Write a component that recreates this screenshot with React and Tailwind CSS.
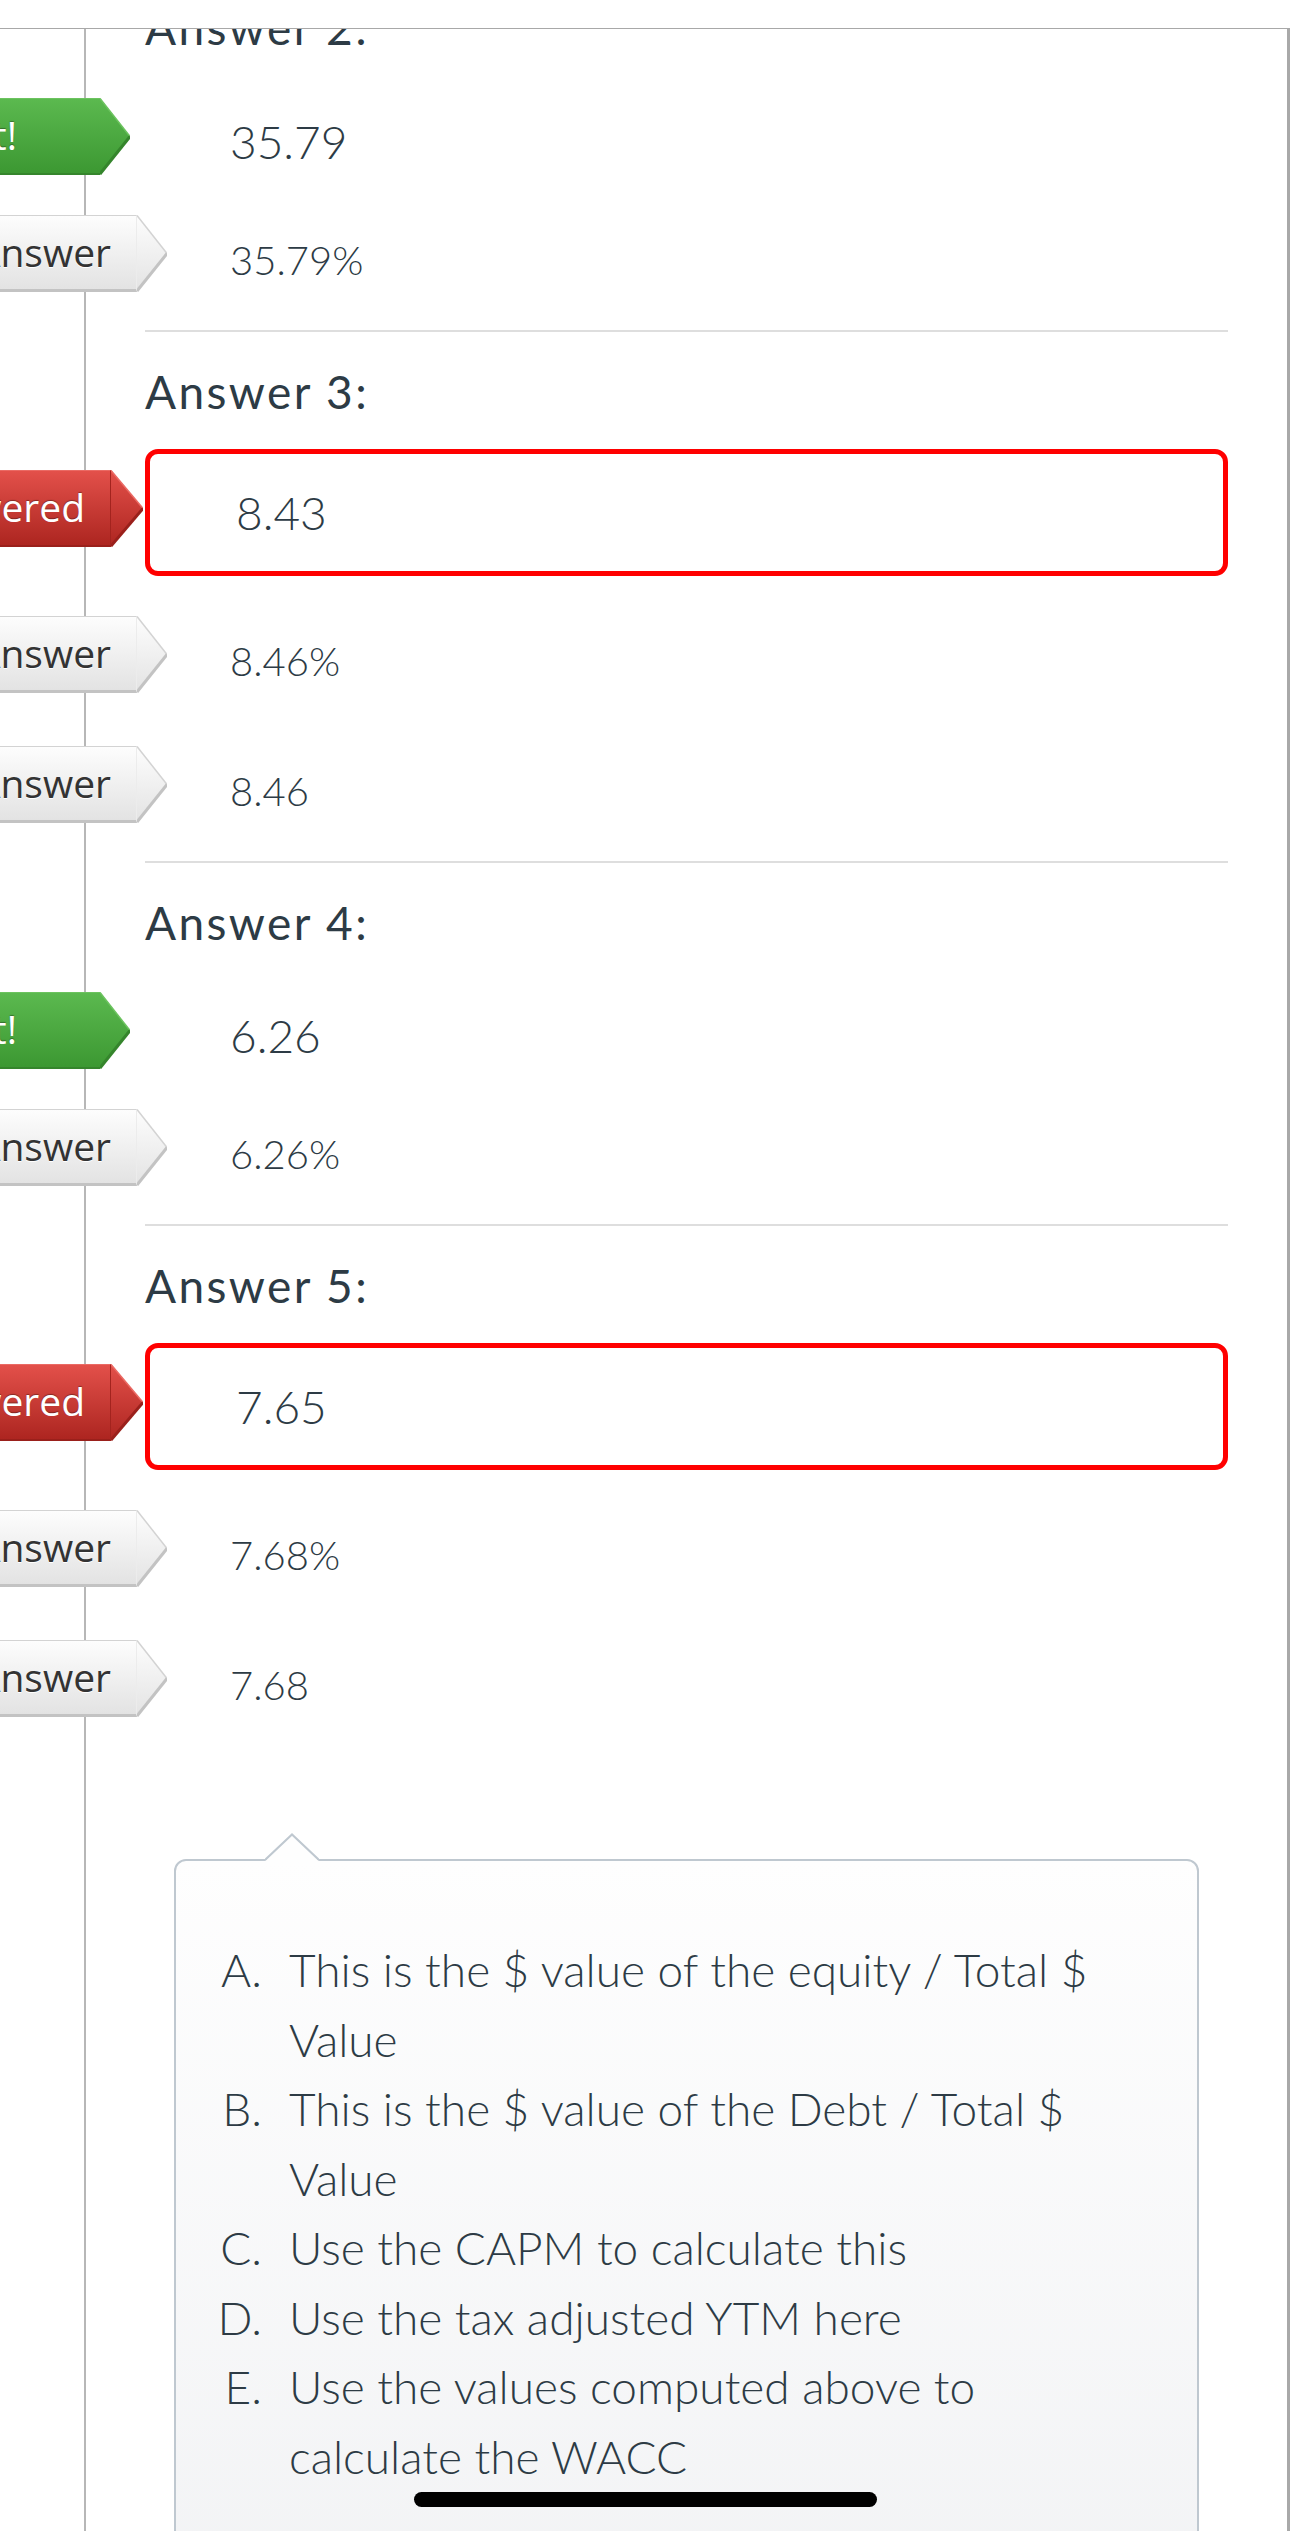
import React from "react";

// colours of the three answer arrows
const tones = {
  green: {
    body: "bg-linear-to-b from-[#5bb94f] to-[#3c9832] border-t border-t-[#6cc35f] border-b-2 border-b-[#35852c] text-white [text-shadow:0_-1px_1px_rgba(0,0,0,0.35)]",
    from: "#5bb94f",
    to: "#3c9832",
    edgeTop: "#6cc35f",
    edgeBottom: "#35852c",
    arrow: 30,
    pr: "pr-[83px]",
    mr: "mr-[15px]",
    mb: "mb-[12px]",
  },
  red: {
    body: "bg-linear-to-b from-[#e3504a] to-[#ad2520] border-t border-t-[#ea6a64] border-b-2 border-b-[#9a201b] border-r border-r-[#a3231e] text-white [text-shadow:0_-1px_1px_rgba(0,0,0,0.35)]",
    from: "#e3504a",
    to: "#ad2520",
    edgeTop: "#ea6a64",
    edgeBottom: "#9a201b",
    arrow: 32,
    pr: "pr-[25px]",
    mr: "mr-[2px]",
    mb: "mb-[9px]",
  },
  gray: {
    body: "bg-linear-to-b from-[#fdfdfd] to-[#e3e3e3] border-t border-t-[#d3d3d3] border-b-[3px] border-b-[#c3c3c3] border-r border-r-[#ececec] text-[#333] [text-shadow:0_1px_0_#fff]",
    from: "#fdfdfd",
    to: "#e3e3e3",
    edgeTop: "#d3d3d3",
    edgeBottom: "#c3c3c3",
    arrow: 30,
    pr: "pr-[25px]",
    mr: "-mr-[22px]",
    mb: "mb-[14px]",
  },
};

const Tag = ({ label, tone }) => {
  const t = tones[tone];
  const id = "grad-" + tone;
  return (
    <div className="flex h-[77px] shrink-0">
      <div
        className={`flex items-center pl-[40px] whitespace-nowrap text-[39px] font-['Open_Sans',sans-serif] ${t.body} ${t.pr}`}
      >
        {label}
      </div>
      <svg width={t.arrow} height="77" viewBox={`0 0 ${t.arrow} 77`}>
        <defs>
          <linearGradient id={id} x1="0" y1="0" x2="0" y2="1">
            <stop offset="0" stopColor={t.from} />
            <stop offset="1" stopColor={t.to} />
          </linearGradient>
        </defs>
        <polygon points={`0,0 ${t.arrow},38.5 0,77`} fill={`url(#${id})`} />
        <line x1="0" y1="0.5" x2={t.arrow} y2="38.5" stroke={t.edgeTop} strokeWidth="1.5" />
        <line x1={t.arrow} y1="38.5" x2="0" y2="76" stroke={t.edgeBottom} strokeWidth="3" />
      </svg>
    </div>
  );
};

// tag sits in the gutter left of the answer, overflowing off the page edge
const TagSlot = ({ label, tone }) => (
  <div className={`-ml-[145px] w-[145px] shrink-0 flex justify-end ${tones[tone].mb}`}>
    <div className={`shrink-0 ${tones[tone].mr}`}>
      <Tag label={label} tone={tone} />
    </div>
  </div>
);

const Picked = ({ value }) => (
  <div className="flex items-center h-[106px] shrink-0">
    <TagSlot label="Correct!" tone="green" />
    <div className="flex-1 pl-[85px] text-[46px] leading-[1.2] font-light">{value}</div>
  </div>
);

const Wrong = ({ value }) => (
  <div className="mt-[30px] mb-[20px] flex items-center shrink-0">
    <TagSlot label="You Answered" tone="red" />
    <div className="flex-1 h-[127px] flex items-center pl-[86px] border-[5px] border-[#ff0000] rounded-[13px] text-[46px] leading-[1.2] font-light">
      {value}
    </div>
  </div>
);

const Right = ({ value }) => (
  <div className="flex items-center h-[130px] shrink-0">
    <TagSlot label="Correct Answer" tone="gray" />
    <div className="flex-1 pl-[85px] text-[40px] leading-[1.2] font-light">{value}</div>
  </div>
);

const Heading = ({ children, className = "" }) => (
  <div className={`h-[55px] shrink-0 text-[46px] leading-[55px] tracking-[2.4px] whitespace-nowrap ${className}`}>{children}</div>
);

const Divider = () => <div className="mt-[5px] h-[2px] bg-[#dedede] shrink-0" />;

const hints = [
  ["A.", "This is the $ value of the equity / Total $ Value"],
  ["B.", "This is the $ value of the Debt / Total $ Value"],
  ["C.", "Use the CAPM to calculate this"],
  ["D.", "Use the tax adjusted YTM here"],
  ["E.", "Use the values computed above to calculate the WACC"],
];

export default function App() {
  return (
    <div className="relative w-[1290px] h-[2531px] overflow-hidden bg-white text-[#2d3b45] font-['Lato',sans-serif]">
      <div className="relative z-10 h-[29px] bg-white border-b border-b-[#a8a8a8]" />

      <div className="ml-[84px] min-h-[2502px] flex flex-col pl-[59px] pr-[59px] border-l-2 border-l-[#b7b7b7] border-r-[3px] border-r-[#a9a9a9]">
        {/* Answer 2 */}
        <Heading className="-mt-[29px]">Answer 2:</Heading>
        <div className="mt-[34px] shrink-0">
          <Picked value="35.79" />
          <Right value="35.79%" />
        </div>
        <Divider />

        {/* Answer 3 */}
        <Heading className="mt-[32px]">Answer 3:</Heading>
        <Wrong value="8.43" />
        <Right value="8.46%" />
        <Right value="8.46" />
        <Divider />

        {/* Answer 4 */}
        <Heading className="mt-[32px]">Answer 4:</Heading>
        <div className="mt-[33px] shrink-0">
          <Picked value="6.26" />
          <Right value="6.26%" />
        </div>
        <Divider />

        {/* Answer 5 */}
        <Heading className="mt-[32px]">Answer 5:</Heading>
        <Wrong value="7.65" />
        <Right value="7.68%" />
        <Right value="7.68" />

        {/* comment popover */}
        <div className="mt-[83px] mx-[29px] flex flex-col shrink-0">
          <svg className="relative z-10 ml-[91px] -mb-[2px]" width="54" height="28" viewBox="0 0 54 28">
            <polygon points="0,28 27,1.5 54,28" fill="#fefefe" />
            <polyline points="0,27 27,1.5 54,27" fill="none" stroke="#bfc8d0" strokeWidth="2" />
          </svg>
          <div className="h-[800px] border-2 border-[#bfc8d0] rounded-[12px] bg-linear-to-b from-[#fefefe] to-[#f1f2f4] pt-[74px] pr-[47px]">
            <ol>
              {hints.map(([mark, text]) => (
                <li key={mark} className="flex text-[46px] leading-[69.5px] font-light">
                  <span className="w-[86px] shrink-0 text-right">{mark}</span>
                  <span className="pl-[27px]">{text}</span>
                </li>
              ))}
            </ol>
          </div>
        </div>
      </div>

      {/* iOS home indicator */}
      <div className="absolute left-[414px] top-[2492px] w-[463px] h-[15px] rounded-full bg-black" />
    </div>
  );
}
